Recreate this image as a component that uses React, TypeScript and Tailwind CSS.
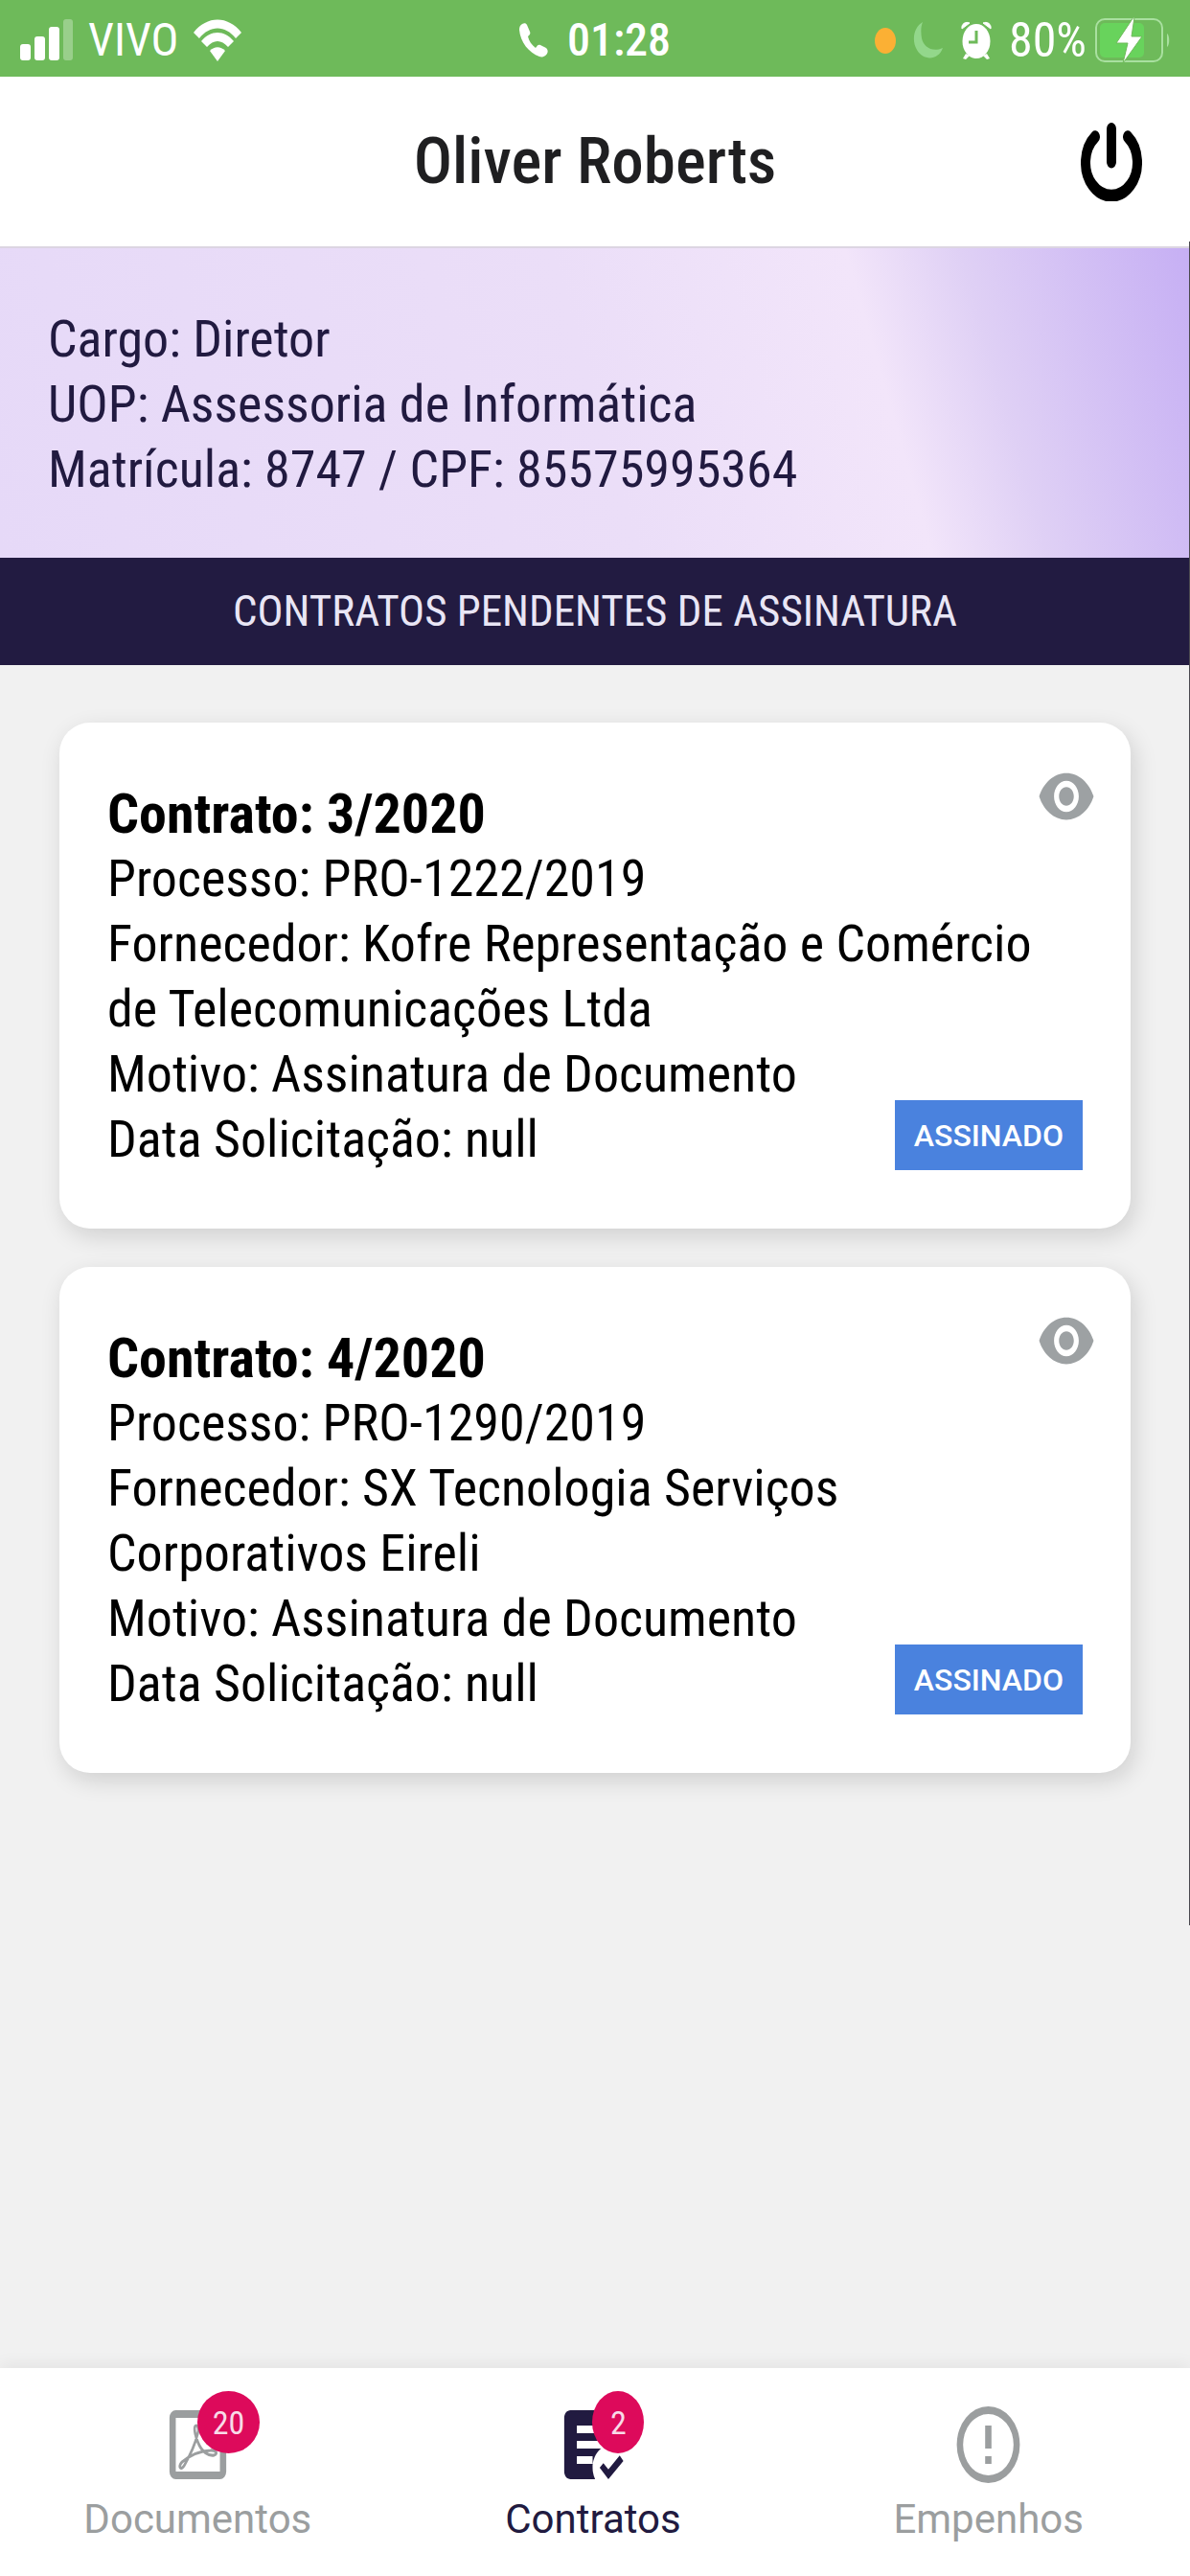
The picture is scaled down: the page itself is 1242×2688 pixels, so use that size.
import type { ReactNode } from 'react';

interface Contract {
  number: string;
  process: string;
  supplier: string;
  reason: string;
  requestedAt: string | null;
}

const contracts: Contract[] = [
  {
    number: '3/2020',
    process: 'PRO-1222/2019',
    supplier: 'Kofre Representação e Comércio de Telecomunicações Ltda',
    reason: 'Assinatura de Documento',
    requestedAt: null,
  },
  {
    number: '4/2020',
    process: 'PRO-1290/2019',
    supplier: 'SX Tecnologia Serviços Corporativos Eireli',
    reason: 'Assinatura de Documento',
    requestedAt: null,
  },
];

function StatusBar() {
  return (
    <div className="grid h-20 grid-cols-3 items-center bg-[#6eba5a] px-5 pt-1 text-[48px] leading-none text-white">
      <div className="flex items-center gap-4">
        <svg className="h-[46px] w-14" viewBox="0 0 56 46" fill="currentColor" aria-hidden="true">
          <rect x="1" y="27" width="11" height="17" rx="3" />
          <rect x="16" y="19" width="11" height="25" rx="3" />
          <rect x="31" y="9" width="11" height="35" rx="3" />
          <rect x="46" y="1" width="10" height="43" rx="3" opacity="0.3" />
        </svg>
        <span>VIVO</span>
        <svg className="h-11 w-[50px]" viewBox="0 0 50 44" fill="currentColor" aria-hidden="true">
          <path d="M0 14C14 -4 36 -4 50 14L44 20C33 6 17 6 6 20Z" />
          <path d="M8 23C18 11 32 11 42 23L36 29C29 21 21 21 14 29Z" />
          <path d="M17 33C22 28 28 28 33 33L25 44Z" />
        </svg>
      </div>
      <div className="flex items-center justify-center gap-5">
        <svg className="h-9 w-[30px]" viewBox="0 0 30 36" fill="currentColor" aria-hidden="true">
          <path d="M3 1C5 0 7 0 8 2L11 9C12 11 11 12 9 14C10 19 13 23 17 26C19 23 20 22 22 23L28 26C30 28 30 30 29 32C27 35 24 36 21 35C10 31 1 20 0 7C0 4 1 2 3 1Z" />
        </svg>
        <span className="font-medium">01:28</span>
      </div>
      <div className="flex items-center justify-end gap-[18px]">
        <svg className="h-[27px] w-[22px]" viewBox="0 0 22 27" aria-hidden="true">
          <ellipse cx="11" cy="13.5" rx="11" ry="13.5" fill="#fbb034" />
        </svg>
        <svg className="h-10 w-8" viewBox="0 0 32 40" fill="#93d78b" aria-hidden="true">
          <path d="M10 1C1 6 -2 20 4 30C10 41 26 42 31 28C20 33 11 27 9 18C8 12 8 6 10 1Z" />
        </svg>
        <svg className="h-10 w-8" viewBox="0 0 32 40" fill="currentColor" aria-hidden="true">
          <path d="M1 8C0 3 5 0 9 2ZM31 8C32 3 27 0 23 2Z" stroke="currentColor" strokeWidth="1" />
          <path d="M5 34L9 36L5 40L2 39ZM27 34L23 36L27 40L30 39Z" />
          <ellipse cx="16" cy="21" rx="14.5" ry="18" />
          <path d="M16 10V22H8" fill="none" stroke="#6eba5a" strokeWidth="3" />
        </svg>
        <div className="flex items-center gap-2">
          <span className="text-[50px]">80%</span>
          <svg className="h-12 w-20" viewBox="0 0 80 48" aria-hidden="true">
            <rect x="2" y="2" width="69" height="44" rx="9" fill="none" stroke="#a9e0a0" strokeWidth="2" />
            <rect x="6" y="6" width="46" height="36" rx="5" fill="#68d35c" />
            <path d="M76 17C79 19 79 29 76 31Z" fill="#a9e0a0" />
            <path d="M41 0L23 27H35L30 48L50 20H39L42 0Z" fill="#fff" stroke="#6eba5a" strokeWidth="1" />
          </svg>
        </div>
      </div>
    </div>
  );
}

function Header() {
  return (
    <header className="grid h-[179px] grid-cols-[1fr_auto_1fr] items-center border-b-2 border-[#dcd5e2] bg-white px-[50px]">
      <h1 className="col-start-2 text-[67px] font-medium leading-none text-[#1f1f21]">Oliver Roberts</h1>
      <button type="button" aria-label="Sair" className="justify-self-end text-black">
        <svg
          className="h-[82px] w-16"
          viewBox="0 0 64 64"
          preserveAspectRatio="none"
          fill="none"
          stroke="currentColor"
          strokeWidth="10"
          strokeLinecap="round"
          aria-hidden="true"
        >
          <path d="M32 5V32" />
          <path d="M15 11.500A27 27 0 1 0 49 11.500" />
        </svg>
      </button>
    </header>
  );
}

function ProfileBanner() {
  return (
    <section className="bg-[linear-gradient(74deg,#e6d9f8_0%,#ebdef8_50%,#f2e5fa_73%,#dfd0f5_82%,#c6aff4_100%)] px-[50px] pb-[58px] pt-[61px] text-[54px] leading-[68px] text-[#211a40]">
      <p>Cargo: Diretor</p>
      <p>UOP: Assessoria de Informática</p>
      <p>Matrícula: 8747 / CPF: 85575995364</p>
    </section>
  );
}

function ContractCard({ contract }: { contract: Contract }) {
  return (
    <article className="relative rounded-[32px] bg-white px-[50px] pb-[59px] pt-[61px] text-[54px] leading-[68px] text-black shadow-[4px_8px_24px_rgba(0,0,0,0.14)]">
      <h3 className="text-[58px] font-bold">{`Contrato: ${contract.number}`}</h3>
      <p>{`Processo: ${contract.process}`}</p>
      <p>{`Fornecedor: ${contract.supplier}`}</p>
      <p>{`Motivo: ${contract.reason}`}</p>
      <p>{`Data Solicitação: ${contract.requestedAt}`}</p>
      <button type="button" aria-label="Visualizar" className="absolute right-9 top-[38px] text-[#9da1a3]">
        <svg className="h-[78px] w-[62px]" viewBox="0 0 24 24" preserveAspectRatio="none" fill="currentColor" aria-hidden="true">
          <path d="M12 4.5C7 4.5 2.73 7.61 1 12c1.73 4.39 6 7.5 11 7.5s9.27-3.11 11-7.5c-1.73-4.39-6-7.5-11-7.5zM12 17c-2.76 0-5-2.24-5-5s2.24-5 5-5 5 2.24 5 5-2.24 5-5 5zm0-8c-1.66 0-3 1.34-3 3s1.34 3 3 3 3-1.34 3-3-1.34-3-3-3z" />
        </svg>
      </button>
      <button
        type="button"
        className="absolute bottom-[61px] right-[50px] flex h-[73px] items-center bg-[#4a82de] px-5 font-[Roboto,sans-serif] text-[32px] font-medium leading-none text-white"
      >
        ASSINADO
      </button>
    </article>
  );
}

interface TabProps {
  label: string;
  active?: boolean;
  badge?: number;
  children: ReactNode;
}

function Tab({ label, active, badge, children }: TabProps) {
  return (
    <a
      href={`#${label.toLowerCase()}`}
      aria-current={active ? 'page' : undefined}
      className={`flex flex-col items-center ${active ? 'text-[#211a40]' : 'text-[#9b9e9f]'}`}
    >
      <span className="relative">
        <svg className="h-24 w-[79px]" viewBox="0 0 24 24" preserveAspectRatio="none" fill="currentColor" aria-hidden="true">
          {children}
        </svg>
        {badge !== undefined && (
          <span className="absolute -top-2 left-[39px] flex h-[65px] min-w-[54px] items-center justify-center rounded-[50%] bg-[#dd0a5b] px-4 text-[34px] leading-none text-[#f8dbe8]">
            {badge}
          </span>
        )}
      </span>
      <span className="font-[Roboto,sans-serif] text-[42px] leading-[60px]">{label}</span>
    </a>
  );
}

function BottomTabs() {
  return (
    <nav className="relative grid grid-cols-3 bg-white pb-[29px] pr-1 pt-8 shadow-[0_-4px_16px_rgba(0,0,0,0.06)]">
      <Tab label="Documentos" badge={20}>
        <path d="M5 3a2 2 0 0 0-2 2v14a2 2 0 0 0 2 2h14a2 2 0 0 0 2-2V5a2 2 0 0 0-2-2zm0 2h14v14H5z" fillRule="evenodd" />
        <path
          d="M11.6 7C10.300 7 11.300 10 12.100 11.500C13.300 14 15.500 15 17.200 14.700C18.400 14.400 17.800 13.400 16 13.500C13 13.600 9.500 14.800 7 16.500C5.500 17.800 6.700 18.800 7.700 17.400C9.500 14.800 11.500 11 12.100 8.500C12.200 7.600 12 7 11.600 7Z"
          fill="none"
          stroke="currentColor"
          strokeWidth="0.8"
        />
      </Tab>
      <Tab label="Contratos" badge={2} active>
        <path d="M17 21l-2.750-3 1.160-1.160L17 18.430l3.590-3.590 1.160 1.410L17 21M12.800 21H5c-1.110 0-2-.890-2-2V5c0-1.110.890-2 2-2h14c1.110 0 2 .890 2 2v7.800c-.610-.350-1.280-.590-2-.720-.330-.050-.670-.080-1-.080-3.310 0-6 2.690-6 6 0 .340.030.670.080 1 .130.720.370 1.390.720 2M12 17H7v-2h5M14.680 13H7v-2h10v1.080c-.850.140-1.630.460-2.320.920M17 9H7V7h10" fillRule="evenodd" />
      </Tab>
      <Tab label="Empenhos">
        <path d="M11 15h2v2h-2zm0-8h2v6h-2zm1-5a10 10 0 1 0 0 20 10 10 0 0 0 0-20zm0 18a8 8 0 1 1 0-16 8 8 0 0 1 0 16z" />
      </Tab>
    </nav>
  );
}

export default function App() {
  return (
    <div className="relative flex min-h-screen flex-col bg-[#f1f1f1] font-['Roboto_Condensed',Roboto,sans-serif]">
      <StatusBar />
      <Header />
      <main className="flex-1">
        <ProfileBanner />
        <h2 className="bg-[#221b41] text-center text-[45px] leading-[112px] text-[#e9e6f5]">
          CONTRATOS PENDENTES DE ASSINATURA
        </h2>
        <div className="flex flex-col gap-10 px-[62px] py-[60px]">
          {contracts.map((contract) => (
            <ContractCard key={contract.number} contract={contract} />
          ))}
        </div>
      </main>
      <BottomTabs />
      {/* scroll indicator */}
      <div className="absolute right-0 top-[252px] h-[1757px] w-px bg-[#4b4a50]" />
    </div>
  );
}
